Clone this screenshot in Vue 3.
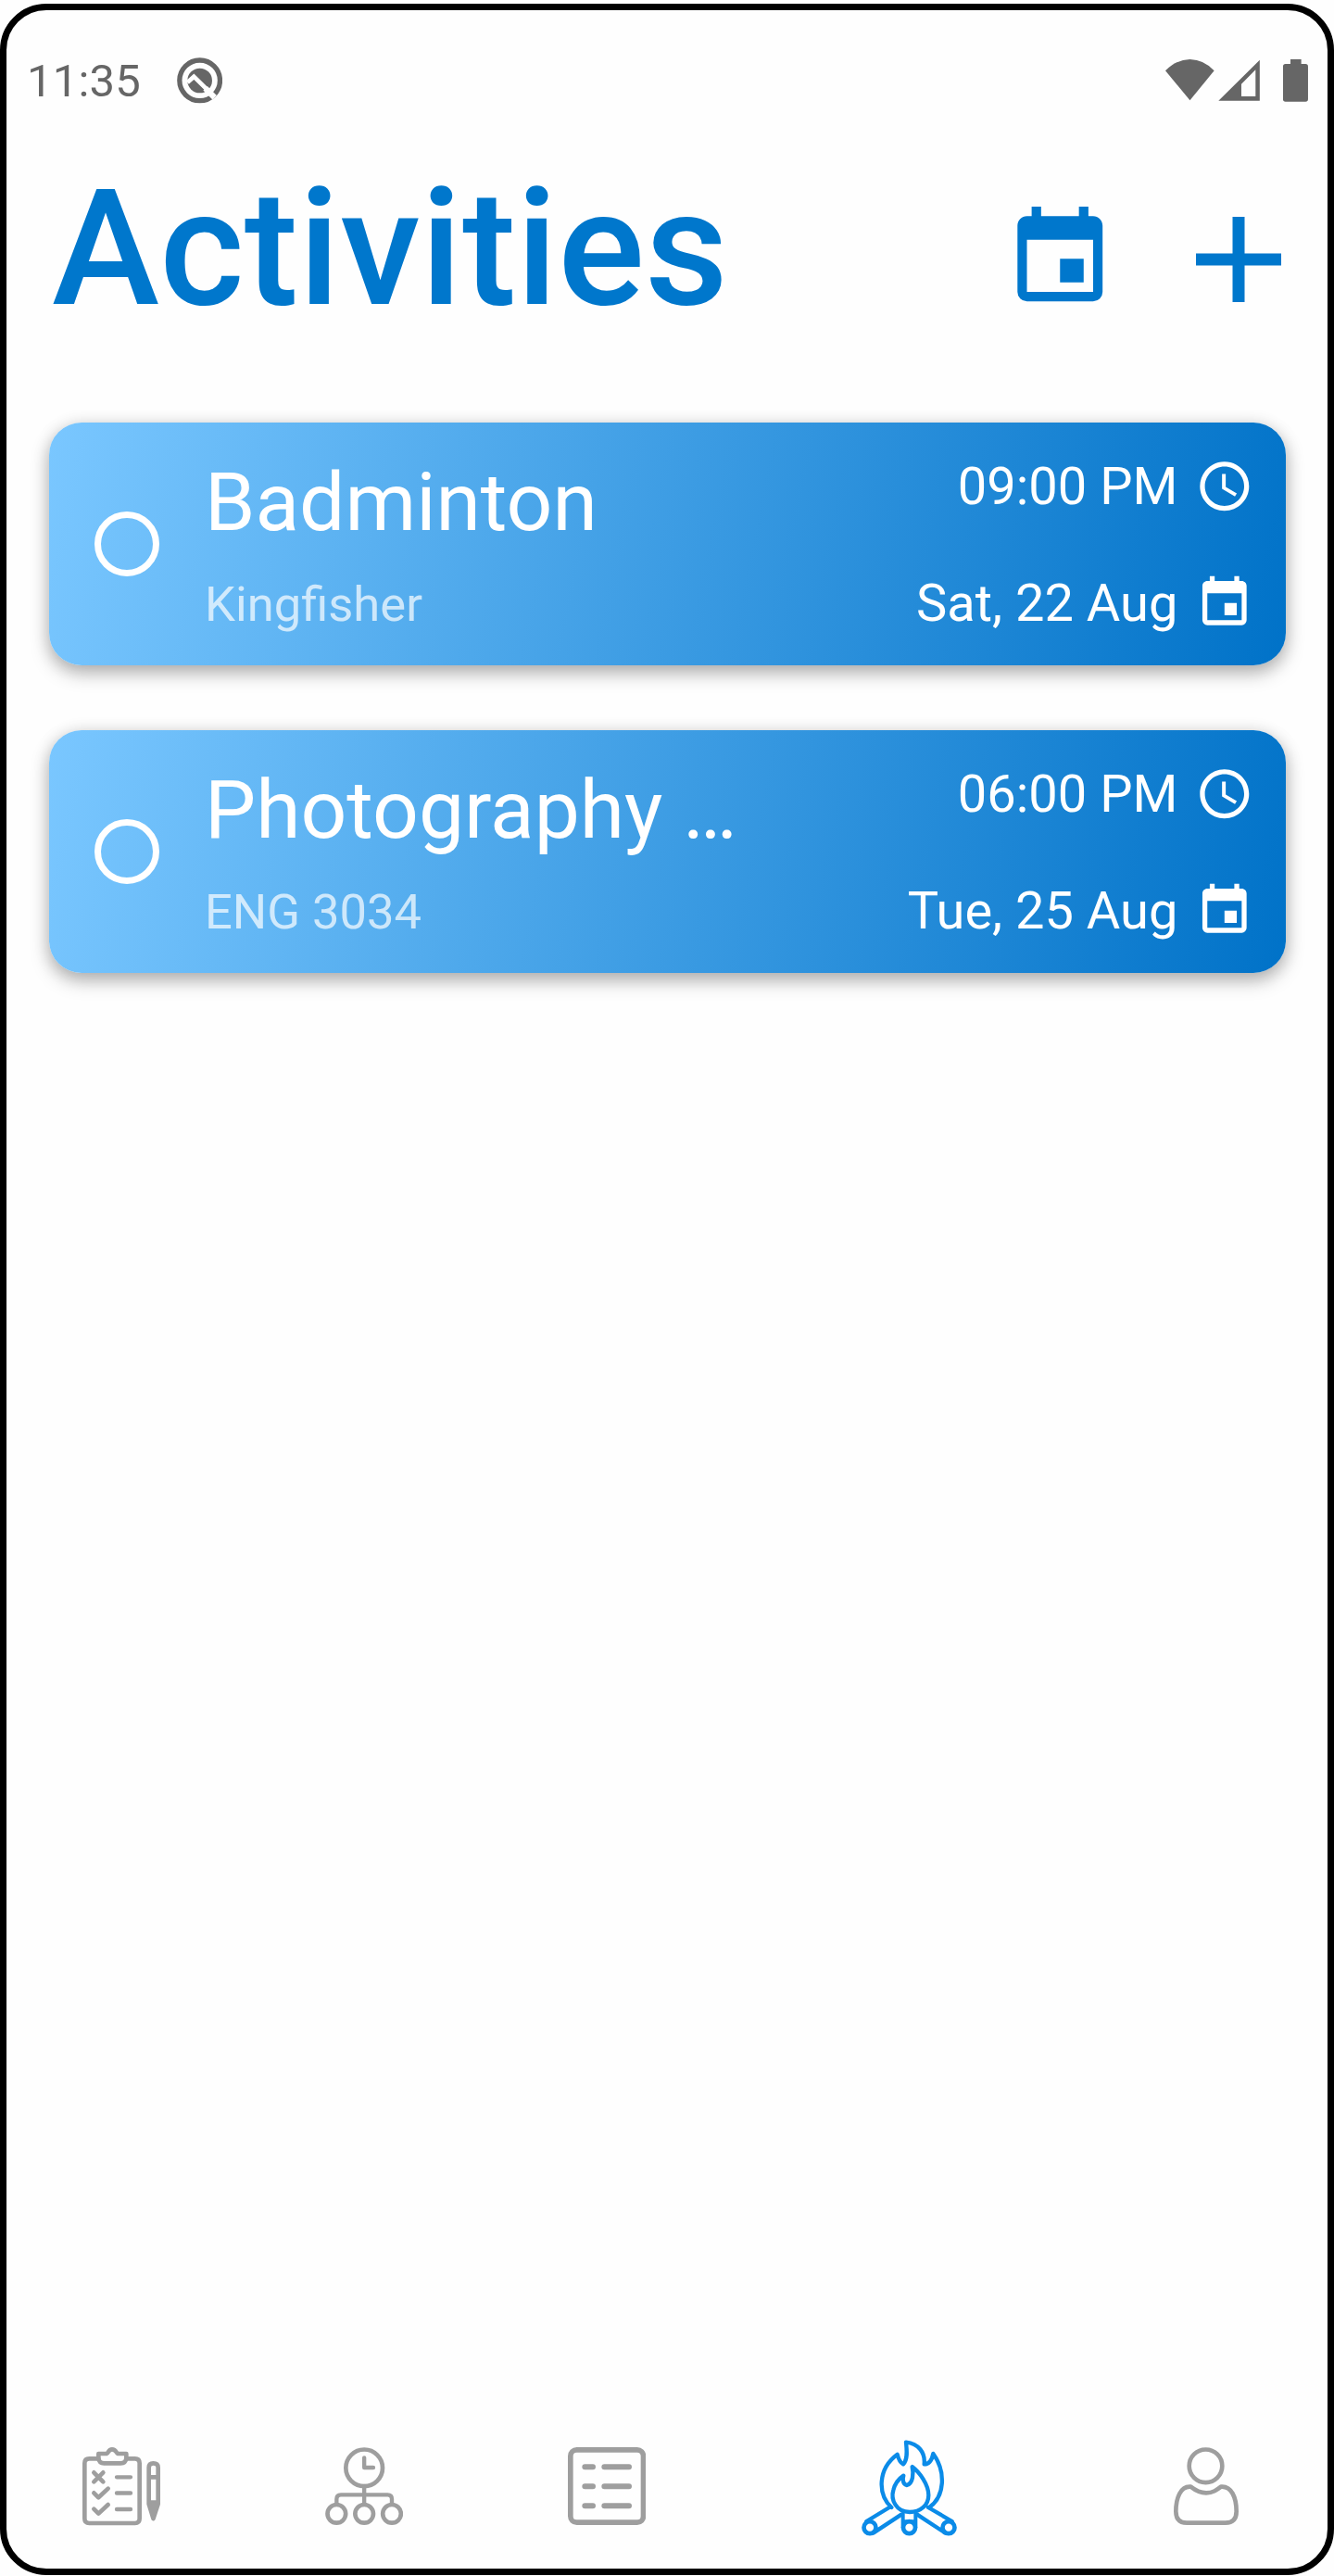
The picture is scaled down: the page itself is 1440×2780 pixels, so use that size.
<script setup>
const calendarPath =
  'M19 19H5V8h14M16 1v2H8V1H6v2H5c-1.11 0-2 .89-2 2v14a2 2 0 0 0 2 2h14a2 2 0 0 0 2-2V5c0-1.11-.9-2-2-2h-1V1m-1 11h-5v5h5v-5z'
const clockPath =
  'M11.99 2C6.47 2 2 6.48 2 12s4.47 10 9.99 10C17.52 22 22 17.52 22 12S17.52 2 11.99 2zM12 20c-4.42 0-8-3.58-8-8s3.58-8 8-8 8 3.58 8 8-3.58 8-8 8zm.5-13H11v6l5.25 3.15.75-1.23-4.5-2.67z'

const activities = [
  { name: 'Badminton', place: 'Kingfisher', time: '09:00 PM', date: 'Sat, 22 Aug' },
  { name: 'Photography …', place: 'ENG 3034', time: '06:00 PM', date: 'Tue, 25 Aug' },
]
</script>

<template>
  <div class="phone">
    <div class="status">
      <span class="clock">11:35</span>
      <svg class="notice" viewBox="572 183 148 149">
        <circle cx="646" cy="257.500" r="65.500" fill="none" stroke="#666" stroke-width="16" />
        <circle cx="646" cy="258" r="40" fill="#666" />
        <path d="M606 264L627 245L694 311" fill="none" stroke="#fff" stroke-width="14" />
        <path d="M664 283L694 313" stroke="#fff" stroke-width="19" />
      </svg>
      <svg class="signals" viewBox="654 189 463 138" fill="#666">
        <path d="M654 226Q688 190 733.500 189Q779 190 812 226L733.500 322Z" />
        <path fill-rule="evenodd" d="M826 323.500L959.500 191V323.500ZM900 309H946V223L900 269Z" />
        <path d="M1059 189H1094V204H1108Q1116 204 1116 212V318Q1116 326 1108 326H1043Q1035 326 1035 318V212Q1035 204 1043 204H1059Z" />
      </svg>
    </div>

    <header class="header">
      <h1>Activities</h1>
      <svg class="calendar" viewBox="0 0 24 24"><path :d="calendarPath" /></svg>
      <svg class="plus" viewBox="0 0 92 92"><path d="M39.500 0h13v39.500H92v13H52.500V92h-13V52.500H0v-13h39.500z" /></svg>
    </header>

    <main class="list">
      <article v-for="item in activities" :key="item.name" class="card">
        <span class="check"></span>
        <div class="info">
          <h2>{{ item.name }}</h2>
          <p>{{ item.place }}</p>
        </div>
        <div class="when">
          <div class="row">
            <span>{{ item.time }}</span>
            <svg viewBox="0 0 24 24"><path :d="clockPath" /></svg>
          </div>
          <div class="row">
            <span>{{ item.date }}</span>
            <svg viewBox="0 0 24 24"><path :d="calendarPath" /></svg>
          </div>
        </div>
      </article>
    </main>

    <nav class="tabs">
      <svg class="tab" viewBox="87 91 252 254" width="84" height="84.670">
        <path d="M139 128H109Q94 128 94 143V322Q94 337 109 337H257Q272 337 272 322V143Q272 128 257 128H229" stroke-width="14" />
        <path d="M139 112H165C172 110 170 98 183 98C197 98 195 110 202 112H229V127Q227 143 211 143H157Q141 143 139 127Z" stroke-width="14" />
        <path d="M124 173L154 203M154 173L124 203M124 239L139 254L170 225M124 291L139 306L170 277" stroke-width="14" />
        <path d="M198 188H243M198 239.500H243M198 292H243" stroke-width="13" />
        <path d="M302 275V157Q302 143 316.500 143Q332 143 332 157V275L316.500 322ZM302 188H332M304 270H330M309 274L316.500 300L325 274" stroke-width="14" />
      </svg>
      <svg class="tab" viewBox="92 92 252 253" width="84" height="84.330">
        <circle cx="218.500" cy="159" r="59.500" stroke-width="14" />
        <path d="M218.500 126V158H248" stroke-width="13" />
        <path d="M218.500 218V276M129 276V260Q129 246 143 246H294Q308 246 308 260V276" stroke-width="13" />
        <circle cx="129" cy="307.500" r="29.500" stroke-width="14" />
        <circle cx="218.500" cy="307.500" r="29.500" stroke-width="14" />
        <circle cx="308" cy="307.500" r="29.500" stroke-width="14" />
      </svg>
      <svg class="tab" viewBox="97 92 253 253" width="84.330" height="84.330">
        <rect x="105.500" y="100.500" width="236" height="235" rx="20" stroke-width="17" />
        <path d="M152 155.500H178M215 155.500H295M152 218.500H178M215 218.500H295M152 282H178M215 282H295" stroke-width="18" />
      </svg>
      <svg class="tab active" viewBox="90 69 309 312" width="103" height="104">
        <path d="M187 288C142 246 141 164 206 116C210 133 216 143 225 148C241 133 236 98 234 77C274 82 297 109 293 148C309 148 318 135 322 114C364 173 360 253 309 288" stroke-width="13" />
        <path d="M246 303C201 303 184 262 193 232C198 211 211 195 226 185C221 200 226 214 237 216C257 210 259 178 254 156C278 174 307 214 307 248C307 281 281 303 246 303Z" stroke-width="13" />
        <path d="M180 288L106 333M219 311L129 370M306 288L383 333M270 311L360 370" stroke-width="13" />
        <circle cx="117" cy="353" r="19.500" stroke-width="14" />
        <circle cx="372" cy="353" r="19.500" stroke-width="14" />
        <circle cx="244.500" cy="353" r="19.500" stroke-width="14" />
        <path d="M224 308V353M265 308V353M224 334H265" stroke-width="12" />
      </svg>
      <svg class="tab" viewBox="81 92 210 253" width="70" height="84.330">
        <circle cx="184.500" cy="153" r="53.500" stroke-width="14" />
        <path d="M136 220C103 217 88 257 88 300Q88 337 123 337H249Q284 337 284 300C284 255 268 217 234 220C221 230 208 240 186 240C164 240 150 231 136 220Z" stroke-width="14" />
      </svg>
    </nav>
  </div>
</template>

<style>
body {
  background: #fefefe;
}
</style>

<style scoped>
.phone {
  box-sizing: border-box;
  width: 1440px;
  height: 2775px;
  margin-top: 4px;
  border: 7px solid #000;
  border-radius: 50px;
  background: #fefefe;
  display: flex;
  flex-direction: column;
  font-family: Roboto, "Liberation Sans", sans-serif;
}
h1,
h2,
p {
  margin: 0;
  font-weight: 400;
}
svg {
  display: block;
  flex: none;
}
.status {
  height: 60px;
  margin-top: 46px;
  padding: 0 21px 0 22px;
  display: flex;
  align-items: center;
  color: #666;
}
.clock {
  font-size: 49px;
  line-height: 60px;
  padding-top: 1px;
  width: 162px;
  letter-spacing: 0.200px;
}
.notice {
  width: 49.300px;
  height: 49.700px;
}
.signals {
  width: 154.300px;
  height: 46px;
  margin-left: auto;
}
.header {
  height: 205px;
  margin-top: 49px;
  padding: 0 50px 0 49px;
  display: flex;
  align-items: center;
  color: #07c;
}
.header svg {
  fill: currentColor;
}
h1 {
  flex: 1;
  font-size: 175px;
  line-height: 205px;
  font-weight: 500;
  letter-spacing: 0.200px;
}
.calendar {
  width: 122.500px;
  height: 122.500px;
  margin: 22px 86px 0 0;
}
.plus {
  width: 92px;
  height: 92px;
  margin-top: 22px;
}
.list {
  flex: 1;
  margin-top: 85px;
  padding: 0 45px 0 46px;
  display: flex;
  flex-direction: column;
  gap: 70px;
}
.card {
  box-sizing: border-box;
  height: 262px;
  padding: 0 34px 0 49px;
  display: flex;
  align-items: center;
  border-radius: 35px;
  color: #fff;
  background: linear-gradient(101.100deg, #7ac7ff, #0072c8);
  box-shadow: 0 9px 20px rgba(0, 0, 0, 0.26), 0 2px 18px rgba(0, 0, 0, 0.13);
}
.check {
  box-sizing: border-box;
  width: 70px;
  height: 70px;
  border: 7px solid #fff;
  border-radius: 50%;
}
.info {
  flex: 1;
  margin: -2px 0 0 49px;
  display: flex;
  flex-direction: column;
  gap: 27px;
}
h2 {
  font-size: 87.500px;
  line-height: 104px;
}
.info p {
  font-size: 52.500px;
  line-height: 62px;
  color: rgba(255, 255, 255, 0.7);
}
.when {
  margin-top: 2px;
  display: flex;
  flex-direction: column;
  align-items: flex-end;
  gap: 62px;
}
.row {
  display: flex;
  align-items: center;
  gap: 19px;
  font-size: 56px;
  line-height: 64px;
}
.row svg {
  width: 63.600px;
  height: 63.600px;
  fill: #fff;
}
.tabs {
  height: 177px;
  margin: 0 -7px;
  display: grid;
  grid-template-columns: 262px 262px 262px 391px 250px;
  align-items: center;
  justify-items: center;
}
.tab {
  fill: none;
  stroke: #9e9e9e;
  stroke-linecap: round;
  stroke-linejoin: round;
}
.tab.active {
  stroke: #0a8be8;
  margin-top: 3px;
}
</style>
